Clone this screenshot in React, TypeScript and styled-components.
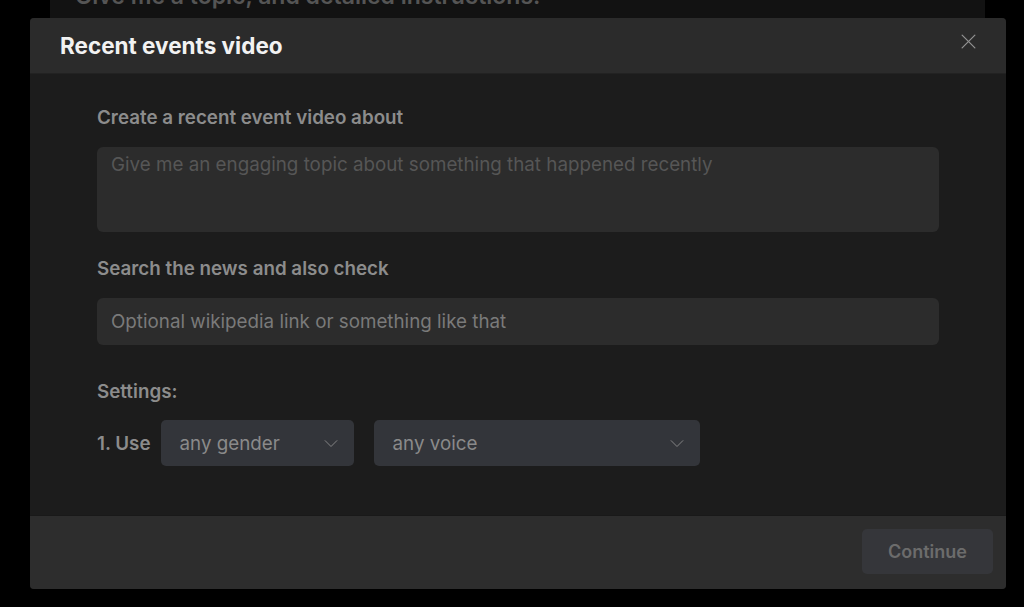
import React from 'react';
import styled, { createGlobalStyle } from 'styled-components';

const GlobalStyle = createGlobalStyle`
  html, body {
    margin: 0;
    padding: 0;
    background: #000;
    font-family: Inter, "Noto Sans", sans-serif;
  }
  * { box-sizing: border-box; }
`;

const Page = styled.div`
  width: 1024px;
  height: 607px;
  overflow: hidden;
  position: relative;
  background: #000;
`;

const BehindPanel = styled.div`
  margin: 0 39px 0 50px;
  height: 60px;
  background: #121212;
  padding: 0 25px;
  overflow: hidden;
`;

const BehindText = styled.p`
  margin: -18px 0 0;
  font-size: 23px;
  font-weight: 600;
  color: #555;
  white-space: nowrap;
`;

const Modal = styled.div`
  position: absolute;
  left: 30px;
  top: 18px;
  width: 976px;
  height: 571px;
  display: flex;
  flex-direction: column;
  background: #1c1c1c;
  border-radius: 4px;
  overflow: hidden;
`;

const Header = styled.div`
  height: 56px;
  flex-shrink: 0;
  display: flex;
  align-items: center;
  justify-content: space-between;
  padding: 0 30px;
  background: #2b2b2b;
  border-bottom: 1px solid #222;
`;

const Title = styled.h2`
  margin: 0;
  font-size: 22.5px;
  font-weight: 700;
  color: #f2f2f2;
`;

const CloseButton = styled.button`
  border: none;
  background: none;
  padding: 0;
  margin-right: -1px;
  margin-top: -8px;
  display: flex;
  cursor: pointer;
`;

const Body = styled.div`
  flex: 1;
  padding: 32px 67px 0;
  display: flex;
  flex-direction: column;
`;

const Label = styled.label<{ space?: number }>`
  display: block;
  font-size: 18.8px;
  line-height: 23px;
  font-weight: 600;
  color: #8c8c8c;
  margin-bottom: ${p => p.space ?? 18}px;
`;

const Field = styled.div<{ gap: number }>`
  margin-bottom: ${p => p.gap}px;
`;

const TextArea = styled.textarea`
  display: block;
  width: 100%;
  height: 85px;
  resize: none;
  border: none;
  outline: none;
  border-radius: 6px;
  background: #2c2c2c;
  padding: 6px 14px;
  font-family: Inter, "Noto Sans", sans-serif;
  font-size: 18.8px;
  line-height: 24px;
  color: #ddd;
  &::placeholder { color: #565656; }
`;

const TextInput = styled.input`
  display: block;
  width: 100%;
  height: 47px;
  border: none;
  outline: none;
  border-radius: 6px;
  background: #2c2c2c;
  padding: 0 14px;
  font-family: Inter, "Noto Sans", sans-serif;
  font-size: 18.8px;
  color: #ddd;
  &::placeholder { color: #7a7a7a; }
`;

const SettingsRow = styled.div`
  display: flex;
  align-items: center;
  gap: 10px;
`;

const RowLabel = styled.span`
  font-size: 18.8px;
  font-weight: 600;
  color: #8c8c8c;
`;

const Select = styled.div<{ width: number; offset?: number }>`
  width: ${p => p.width}px;
  height: 46px;
  border-radius: 5px;
  background: #33353a;
  display: flex;
  align-items: center;
  justify-content: space-between;
  padding: 0 16px 0 19px;
  font-size: 18.8px;
  color: #8a8a8a;
  margin-left: ${p => p.offset ?? 0}px;
`;

const Footer = styled.div`
  height: 74px;
  flex-shrink: 0;
  background: #2d2d2d;
  border-top: 1px solid #191919;
  display: flex;
  align-items: center;
  justify-content: flex-end;
  padding: 0 13px 3px;
`;

const ContinueButton = styled.button`
  width: 131px;
  height: 45px;
  border: none;
  border-radius: 5px;
  background: #35363a;
  color: #6c6c6c;
  font-family: Inter, "Noto Sans", sans-serif;
  font-size: 18px;
  font-weight: 600;
`;

const Chevron = () => (
  <svg width="14" height="14" viewBox="0 0 24 24" fill="none" stroke="#8a8a8a" strokeWidth="1.6" strokeLinecap="round" strokeLinejoin="round">
    <polyline points="2 8 12 18 22 8" />
  </svg>
);

const CloseIcon = () => (
  <svg width="17" height="17" viewBox="0 0 24 24" fill="none" stroke="#8f8f8f" strokeWidth="1.8" strokeLinecap="round">
    <line x1="3" y1="3" x2="21" y2="21" />
    <line x1="21" y1="3" x2="3" y2="21" />
  </svg>
);

export default function App() {
  return (
    <Page>
      <GlobalStyle />
      <BehindPanel>
        <BehindText>Give me a topic, and detailed instructions.</BehindText>
      </BehindPanel>
      <Modal>
        <Header>
          <Title>Recent events video</Title>
          <CloseButton aria-label="Close">
            <CloseIcon />
          </CloseButton>
        </Header>
        <Body>
          <Field gap={25}>
            <Label>Create a recent event video about</Label>
            <TextArea placeholder="Give me an engaging topic about something that happened recently" />
          </Field>
          <Field gap={35}>
            <Label>Search the news and also check</Label>
            <TextInput placeholder="Optional wikipedia link or something like that" />
          </Field>
          <Field gap={0}>
            <Label space={17}>Settings:</Label>
            <SettingsRow>
              <RowLabel>1. Use</RowLabel>
              <Select width={193}>
                <span>any gender</span>
                <Chevron />
              </Select>
              <Select width={326} offset={10}>
                <span>any voice</span>
                <Chevron />
              </Select>
            </SettingsRow>
          </Field>
        </Body>
        <Footer>
          <ContinueButton>Continue</ContinueButton>
        </Footer>
      </Modal>
    </Page>
  );
}
